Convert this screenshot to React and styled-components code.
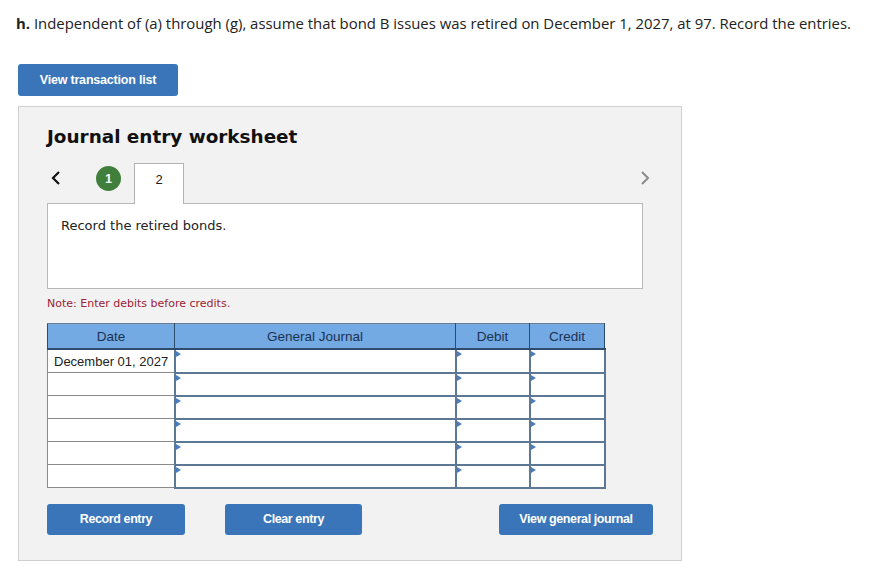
import React from "react";
import styled, { createGlobalStyle } from "styled-components";

const Global = createGlobalStyle`
  body {
    margin: 0;
    background: #ffffff;
    font-family: "Open Sans", "Liberation Sans", sans-serif;
  }
`;

const Page = styled.div`
  padding: 13px 0 0 16px;
`;

const Question = styled.p`
  margin: 0;
  font-size: 14.9px;
  line-height: 20px;
  color: #222;
  b { font-weight: 700; }
`;

const BlueButton = styled.button`
  height: ${(p) => p.h || 32}px;
  width: ${(p) => p.w}px;
  background: #3a75ba;
  color: #fff;
  border: none;
  border-radius: 3px;
  font-family: "Liberation Sans Narrow", "Liberation Sans", Arial, sans-serif;
  font-weight: 700;
  font-size: 12.5px;
  letter-spacing: ${(p) => (p.narrow ? "-0.4px" : "-0.2px")};
  padding: 0;
  cursor: pointer;
`;

const TopButton = styled(BlueButton)`
  margin: 31px 0 0 2px;
  display: block;
`;

const Panel = styled.div`
  margin: 10px 0 0 2px;
  width: 664px;
  height: 455px;
  background: #f2f2f2;
  border: 1px solid #cfcfcf;
  padding: 17px 0 0 28px;
  box-sizing: border-box;
  font-family: "DejaVu Sans", Verdana, sans-serif;
`;

const Title = styled.h2`
  margin: 0;
  font-size: 18.4px;
  line-height: 26px;
  font-weight: 700;
  color: #111;
`;

const TabRow = styled.div`
  display: flex;
  align-items: flex-end;
  width: 605px;
  height: 41px;
  margin-top: 12px;
`;

const Arrow = styled.span`
  display: flex;
  align-items: center;
  height: 31px;
  align-self: flex-start;
  color: ${(p) => p.color};
`;

const StepDone = styled.span`
  width: 25px;
  height: 25px;
  border-radius: 50%;
  background: #3f7f3b;
  color: #fff;
  font-family: "Liberation Sans", Arial, sans-serif;
  font-weight: 700;
  font-size: 12px;
  display: flex;
  align-items: center;
  justify-content: center;
  align-self: flex-start;
  margin: 4px 0 0 27px;
`;

const Tab = styled.div`
  width: 50px;
  height: 41px;
  margin-left: 13px;
  background: #fff;
  border: 1px solid #b3b3b3;
  border-bottom: none;
  box-sizing: border-box;
  display: flex;
  justify-content: center;
  padding-top: 8px;
  font-family: "Liberation Sans", Arial, sans-serif;
  font-size: 13px;
  color: #222;
  position: relative;
  z-index: 1;
  margin-bottom: -1px;
`;

const Spacer = styled.div`
  flex: 1;
`;

const Description = styled.div`
  width: 596px;
  height: 86px;
  background: #fff;
  border: 1px solid #b8b8b8;
  box-sizing: border-box;
  padding: 14px 13px;
  font-size: 13px;
  color: #222;
`;

const Note = styled.p`
  margin: 8px 0 0;
  font-size: 11px;
  line-height: 14px;
  color: #9b2335;
`;

const Table = styled.table`
  margin-top: 12px;
  border-collapse: collapse;
  font-family: "Liberation Sans", Arial, sans-serif;
  font-size: 13px;
`;

const Head = styled.th`
  width: ${(p) => p.w}px;
  height: 24px;
  padding: 0;
  background: #74aae4;
  color: #1a3150;
  font-weight: 400;
  font-size: 13.5px;
  border: 1px solid #2e4b6c;
  border-bottom-width: 2px;
  border-top-color: #6b7d92;
`;

const DateCell = styled.td`
  height: 22px;
  padding: 0 0 0 6px;
  background: #fff;
  border: 1px solid #8a8a8a;
  color: #222;
  text-align: left;
  white-space: nowrap;
`;

const InputCell = styled.td`
  height: 20px;
  padding: 0;
  background: #fff;
  border: 2px solid #5d7895;
  position: relative;
  &::before {
    content: "";
    position: absolute;
    left: 0;
    top: 1px;
    border-left: 5px solid #4a7cc0;
    border-top: 3.5px solid transparent;
    border-bottom: 3.5px solid transparent;
  }
`;

const ButtonRow = styled.div`
  display: flex;
  width: 606px;
  margin-top: 15px;
  gap: 40px;
  ${BlueButton}:last-child { margin-left: auto; }
`;

const rows = ["December 01, 2027", "", "", "", "", ""];

export default function App() {
  return (
    <Page>
      <Global />
      <Question>
        <b>h.</b> Independent of (a) through (g), assume that bond B issues was retired on December 1, 2027, at 97. Record the entries.
      </Question>
      <TopButton w={160}>View transaction list</TopButton>
      <Panel>
        <Title>Journal entry worksheet</Title>
        <TabRow>
          <Arrow color="#111">
            <svg width="22" height="18" viewBox="0 0 22 18">
              <path d="M12 3 L6 9 L12 15" fill="none" stroke="currentColor" strokeWidth="2.2" />
            </svg>
          </Arrow>
          <StepDone>1</StepDone>
          <Tab>2</Tab>
          <Spacer />
          <Arrow color="#8a8a8a">
            <svg width="14" height="18" viewBox="0 0 14 18">
              <path d="M4 3 L10 9 L4 15" fill="none" stroke="currentColor" strokeWidth="2" />
            </svg>
          </Arrow>
        </TabRow>
        <Description>Record the retired bonds.</Description>
        <Note>Note: Enter debits before credits.</Note>
        <Table>
          <thead>
            <tr>
              <Head w={126}>Date</Head>
              <Head w={280}>General Journal</Head>
              <Head w={73}>Debit</Head>
              <Head w={74}>Credit</Head>
            </tr>
          </thead>
          <tbody>
            {rows.map((d, i) => (
              <tr key={i}>
                <DateCell>{d}</DateCell>
                <InputCell />
                <InputCell />
                <InputCell />
              </tr>
            ))}
          </tbody>
        </Table>
        <ButtonRow>
          <BlueButton w={138} h={31} narrow>Record entry</BlueButton>
          <BlueButton w={137} h={31} narrow>Clear entry</BlueButton>
          <BlueButton w={154} h={31} narrow>View general journal</BlueButton>
        </ButtonRow>
      </Panel>
    </Page>
  );
}
